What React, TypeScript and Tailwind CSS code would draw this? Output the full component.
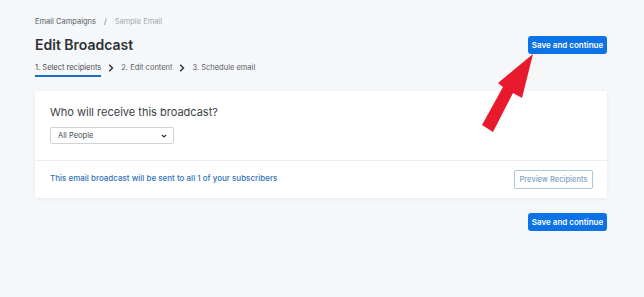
import React from "react";

function Chevron() {
  return (
    <svg width="6" height="8" viewBox="0 0 6 8" className="mx-[7px]">
      <path d="M1.2 0.8 L4.4 4 L1.2 7.2" fill="none" stroke="#3a3f44" strokeWidth="1.6" />
    </svg>
  );
}

function SaveButton() {
  return (
    <button className="block h-[18px] w-[79px] rounded-[3px] bg-[#0b73e6] text-[8px] font-semibold text-white leading-none">
      Save and continue
    </button>
  );
}

export default function App() {
  return (
    <div
      className="relative h-[297px] w-[644px] overflow-hidden bg-[#f6f7f9]"
      style={{ fontFamily: "Inter, 'Noto Sans', sans-serif" }}
    >
      <div className="w-[607px] pl-[35px]">
        <div className="flex items-start justify-between">
          <div className="flex flex-col">
            <div className="mt-[17px] flex items-center text-[7.5px] leading-[10px]">
              <span className="text-[#555b61]">Email Campaigns</span>
              <span className="mx-[8px] text-[#6b7178]">/</span>
              <span className="text-[#a0a7ae]">Sample Email</span>
            </div>
            <h1 className="mt-[9px] text-[14px] font-semibold leading-[17px] text-[#2d3237]">
              Edit Broadcast
            </h1>
            <div className="mt-[10px] flex items-center text-[7.5px] leading-[10px] text-[#5a6066]">
              <div className="flex flex-col">
                <span className="text-[#474c52]">1. Select recipients</span>
                <div className="mt-[2px] h-[2px] w-full bg-[#1b6fc3]" />
              </div>
              <div className="mb-[4px] flex items-center">
                <Chevron />
              </div>
              <span className="mb-[4px]">2. Edit content</span>
              <div className="mb-[4px] flex items-center">
                <Chevron />
              </div>
              <span className="mb-[4px]">3. Schedule email</span>
            </div>
          </div>
          <div className="mt-[36px] flex">
            <SaveButton />
          </div>
        </div>

        <div className="mt-[14px] rounded-[2px] bg-white shadow-[0_1px_4px_rgba(0,0,0,0.06)]">
          <div className="px-[15px] pb-[16px] pt-[15px]">
            <div className="text-[11px] leading-[13px] text-[#3a3f44]">
              Who will receive this broadcast?
            </div>
            <div className="mt-[8px] flex h-[17px] w-[124px] items-center justify-between rounded-[2px] border border-[#cfd3d7] bg-white pl-[7px] pr-[6px]">
              <span className="text-[7.5px] text-[#444a50]">All People</span>
              <svg width="6" height="4" viewBox="0 0 6 4">
                <path d="M0.8 0.8 L3 3 L5.2 0.8" fill="none" stroke="#333" strokeWidth="1.2" />
              </svg>
            </div>
          </div>
          <div className="flex h-[38px] items-center justify-between border-t border-[#eceef0] pl-[15px] pr-[14px]">
            <span className="mb-[3px] text-[8px] font-medium text-[#2f72b8]">
              This email broadcast will be sent to all 1 of your subscribers
            </span>
            <button className="h-[19px] w-[79px] rounded-[2px] border border-[#a9c9dc] bg-white text-[7.5px] font-medium text-[#7ea3c4] leading-none">
              Preview Recipients
            </button>
          </div>
        </div>

        <div className="mt-[15px] flex justify-end">
          <SaveButton />
        </div>
      </div>

      <svg className="absolute left-0 top-0" width="644" height="297" viewBox="0 0 644 297">
        <polygon
          points="533,54 522,98 513,93 493,132 482,125 503,87 498,83"
          fill="#e8192c"
        />
      </svg>
    </div>
  );
}
